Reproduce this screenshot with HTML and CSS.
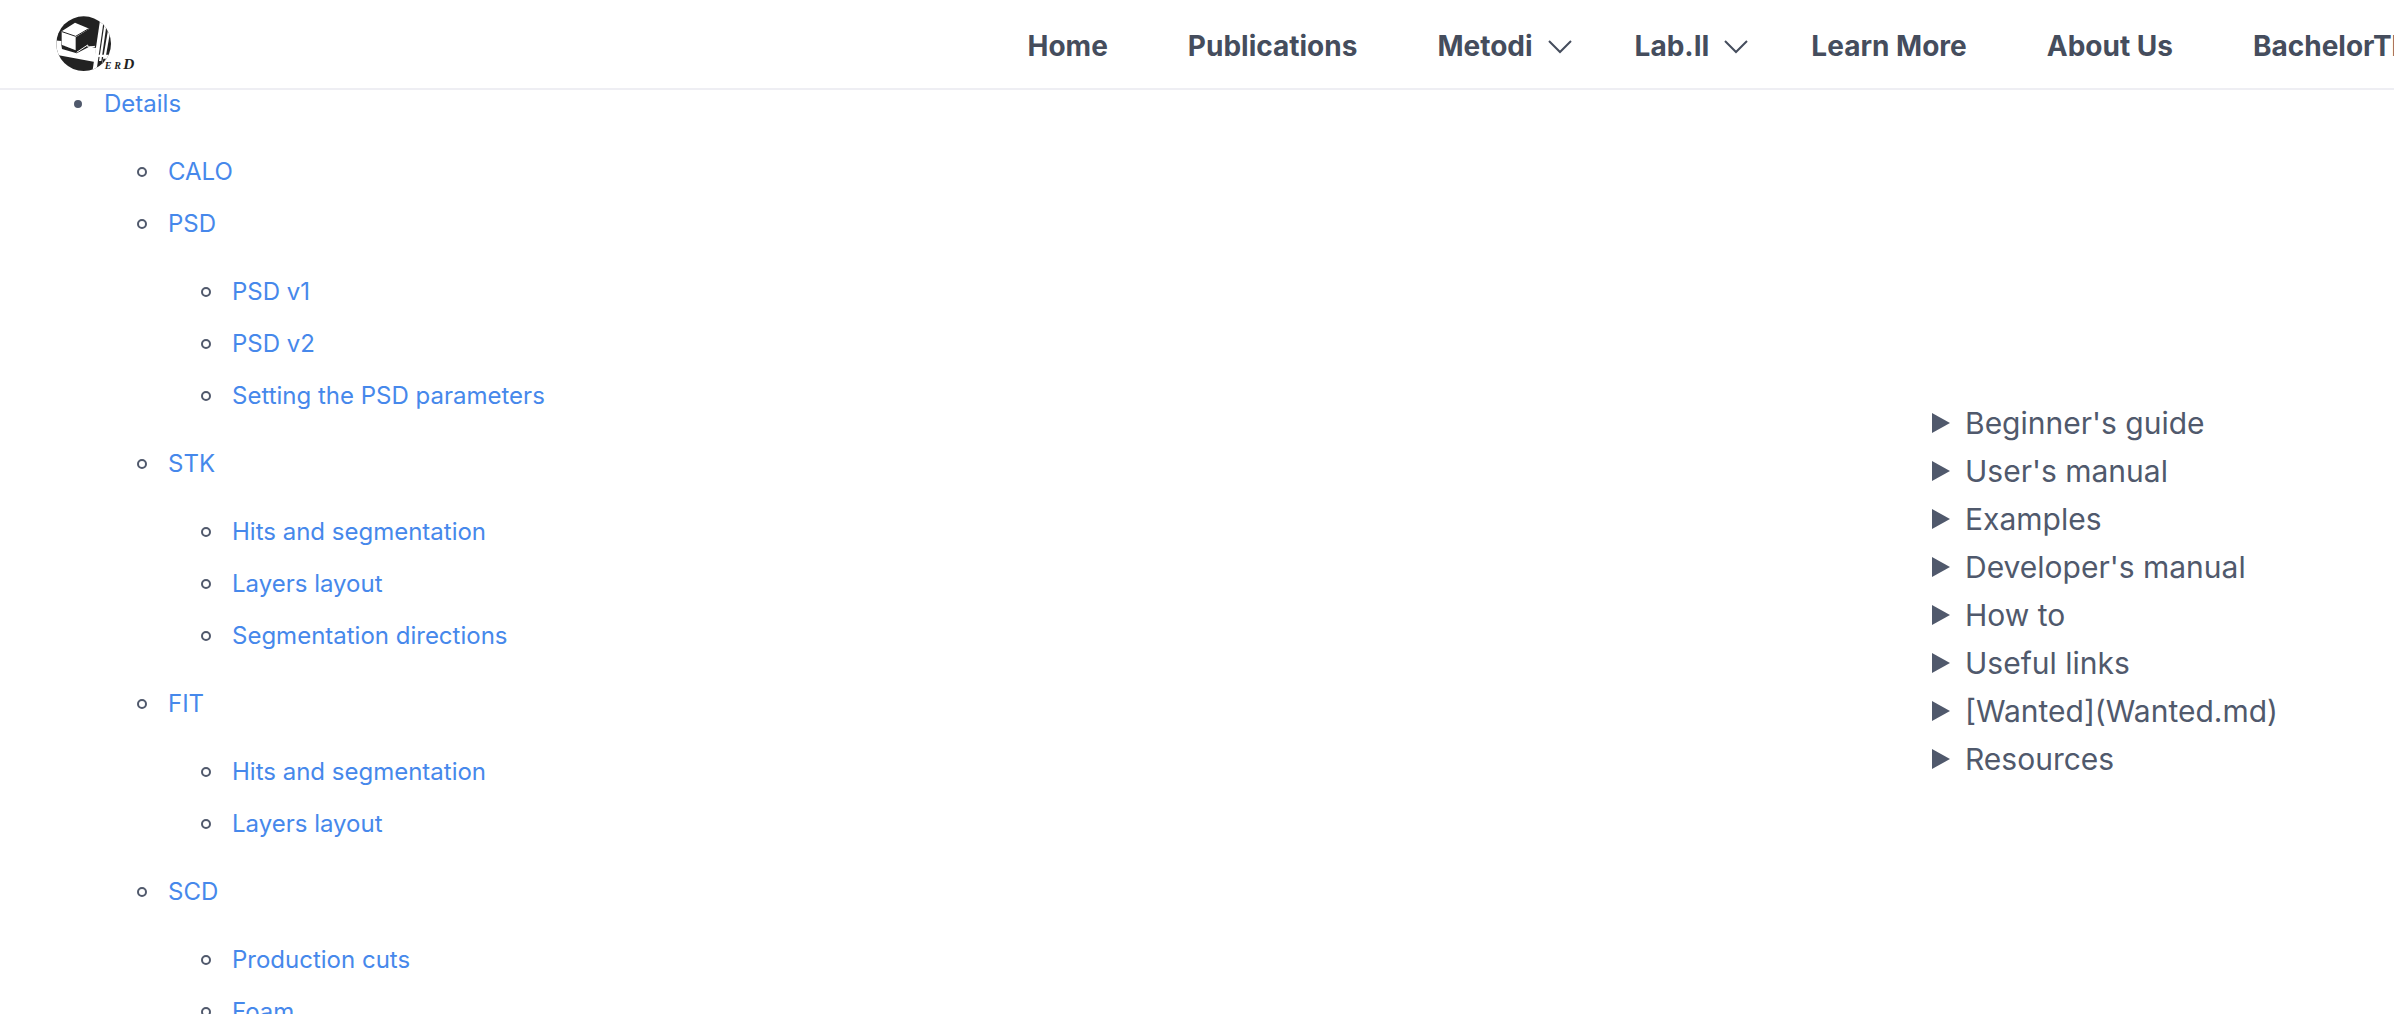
FILE: index.html
```html
<!DOCTYPE html>
<html lang="en">
<head>
<meta charset="utf-8">
<title>HERD Software - Geometry details</title>
<link rel="stylesheet" href="styles.css">
</head>
<body>
<header class="site-header">
  <a class="logo" href="#" aria-label="HERD home">
    <svg viewBox="48 50 240 168" width="80" height="56" aria-hidden="true">
      <defs>
        <clipPath id="disc"><circle cx="131" cy="133" r="82"/></clipPath>
      </defs>
      <g clip-path="url(#disc)">
        <rect x="48" y="50" width="166" height="168" fill="#222"/>
        <path d="M46 123L64 125L64 137L109 153L109 162L144 140L168 146L165 188L46 166Z" fill="#fff"/>
        <path d="M108 151L147 128L151 141L110 162L66 149L64 136Z" fill="#222"/>
        <path d="M110 159L143 137L144 143L165 141" fill="none" stroke="#fff" stroke-width="3"/>
        <path d="M65 96L105 70L148 88L107 114L107 153L65 136Z" fill="#fff"/>
        <path d="M66 97L107 111L146 88" fill="none" stroke="#222" stroke-width="3"/>
        <path d="M182 50L193 50L169 218L157 218Z" fill="#fff"/>
        <path d="M193 76L199 80L184 185L177 185Z" fill="#fff"/>
        <path d="M205 86L211 94L196 180L189 180Z" fill="#fff"/>
        <path d="M160 166L220 166L220 174L160 172Z" fill="#fff"/>
        <path d="M190 174L218 170L218 218L180 218Z" fill="#fff"/>
        <path d="M190 178L198 178L185 200Z" fill="#222"/>
      </g>
      <g class="logo-text">
        <text x="194" y="210" font-size="30">E</text>
        <text x="223" y="210" font-size="30">R</text>
        <text x="250" y="208" font-size="46">D</text>
      </g>
    </svg>
  </a>
  <nav class="main-nav" aria-label="Main">
    <a href="#">Home</a>
    <a href="#">Publications</a>
    <button class="menu" type="button">Metodi
      <svg class="chevron" viewBox="0 0 26 26" width="26" height="26" aria-hidden="true"><path d="M2 8L13 19L24 8"/></svg>
    </button>
    <button class="menu" type="button">Lab.II
      <svg class="chevron" viewBox="0 0 26 26" width="26" height="26" aria-hidden="true"><path d="M2 8L13 19L24 8"/></svg>
    </button>
    <a href="#">Learn More</a>
    <a href="#">About Us</a>
    <a href="#">BachelorThesis</a>
  </nav>
</header>
<div class="page">
  <main>
    <ul class="toc">
      <li><a href="#">Details</a>
        <ul>
          <li><a href="#">CALO</a></li>
          <li><a href="#">PSD</a>
            <ul>
              <li><a href="#">PSD v1</a></li>
              <li><a href="#">PSD v2</a></li>
              <li><a href="#">Setting the PSD parameters</a></li>
            </ul>
          </li>
          <li><a href="#">STK</a>
            <ul>
              <li><a href="#">Hits and segmentation</a></li>
              <li><a href="#">Layers layout</a></li>
              <li><a href="#">Segmentation directions</a></li>
            </ul>
          </li>
          <li><a href="#">FIT</a>
            <ul>
              <li><a href="#">Hits and segmentation</a></li>
              <li><a href="#">Layers layout</a></li>
            </ul>
          </li>
          <li><a href="#">SCD</a>
            <ul>
              <li><a href="#">Production cuts</a></li>
              <li><a href="#">Foam</a></li>
            </ul>
          </li>
        </ul>
      </li>
    </ul>
  </main>
  <aside class="sidebar">
    <details><summary>Beginner's guide</summary></details>
    <details><summary>User's manual</summary></details>
    <details><summary>Examples</summary></details>
    <details><summary>Developer's manual</summary></details>
    <details><summary>How to</summary></details>
    <details><summary>Useful links</summary></details>
    <details><summary>[Wanted](Wanted.md)</summary></details>
    <details><summary>Resources</summary></details>
  </aside>
</div>
</body>
</html>
```
FILE: styles.css
```css
*,
*::before {
  box-sizing: border-box;
}

html {
  overflow-x: hidden;
  scrollbar-width: none;
}

body {
  margin: 0;
  background: #fff;
  color: #50596c;
  font-family: Inter, "Liberation Sans", sans-serif;
  font-size: 24px;
  line-height: 28px;
}

a {
  color: #4688eb;
  text-decoration: none;
}

.site-header {
  display: grid;
  grid-template-columns: 41% 1fr;
  align-items: center;
  height: 90px;
  overflow: hidden;
  border-bottom: 2px solid #eeeef3;
}

.logo {
  display: flex;
  padding-left: 56px;
}

.logo-text {
  fill: #222;
  font-family: "Liberation Serif", serif;
  font-style: italic;
  font-weight: 700;
}

.main-nav {
  display: flex;
  align-items: center;
  min-width: 0;
  padding: 4px 0 0 6px;
  white-space: nowrap;
}

.main-nav a,
.menu {
  flex: none;
  padding: 0 40px;
  color: #454d5d;
  font: 700 28px/36px Inter, "Liberation Sans", sans-serif;
}

.menu {
  display: flex;
  align-items: center;
  gap: 14px;
  padding-right: 22px;
  border: 0;
  background: none;
}

.chevron {
  fill: none;
  stroke: #454d5d;
  stroke-width: 2;
}

.page {
  display: grid;
  grid-template-columns: 1fr 462px;
}

.toc,
.toc ul {
  margin: 0;
  padding-left: 64px;
  list-style: none;
}

.toc {
  padding-left: 104px;
}

.toc ul {
  margin-top: 40px;
  padding-bottom: 16px;
}

.toc li + li {
  margin-top: 24px;
}

.toc li::before {
  content: "";
  display: inline-block;
  width: 10px;
  height: 10px;
  margin: 0 21px 3px -31px;
  border: 2px solid #50596c;
  border-radius: 50%;
}

.toc > li::before {
  width: 8px;
  height: 8px;
  margin: 0 22px 4px -30px;
  background: #50596c;
}

.sidebar {
  padding-top: 309px;
  font-size: 30px;
  line-height: 48px;
}

.sidebar summary {
  display: flex;
  align-items: center;
  gap: 15px;
}

.sidebar summary::before {
  content: "";
  width: 18px;
  height: 20px;
  background: #50596c;
  clip-path: polygon(0 0, 100% 50%, 0 100%);
}
```
